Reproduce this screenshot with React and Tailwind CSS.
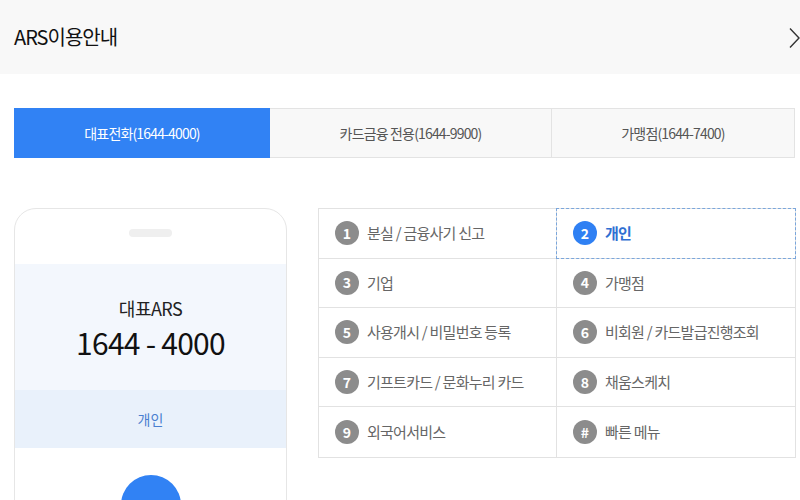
import React from 'react';

const menus = [
  { key: '1', label: '분실 / 금융사기 신고' },
  { key: '2', label: '개인', active: true },
  { key: '3', label: '기업' },
  { key: '4', label: '가맹점' },
  { key: '5', label: '사용개시 / 비밀번호 등록' },
  { key: '6', label: '비회원 / 카드발급진행조회' },
  { key: '7', label: '기프트카드 / 문화누리 카드' },
  { key: '8', label: '채움스케치' },
  { key: '9', label: '외국어서비스' },
  { key: '#', label: '빠른 메뉴' },
];

const tabs = [
  { label: '대표전화(1644-4000)', width: 'w-[256px]', active: true },
  { label: '카드금융 전용(1644-9900)', width: 'w-[282px]' },
  { label: '가맹점(1644-7400)', width: 'flex-1' },
];

const MenuCell = ({ item, index }) => {
  const isRight = index % 2 === 1;
  const isLastRow = index >= menus.length - 2;
  return (
    <div
      className={`relative flex h-[49.6px] items-center pl-4 ${isRight ? '' : 'border-r border-[#e2e2e2]'} ${isLastRow ? '' : 'border-b border-[#e2e2e2]'}`}
    >
      {item.active && (
        <div className="pointer-events-none absolute -inset-px border border-dashed border-[#7aa6dc]" />
      )}
      <span
        className={`flex h-6 w-6 shrink-0 items-center justify-center rounded-full text-[14px] font-bold text-white ${item.active ? 'bg-[#2f80f3]' : 'bg-[#8c8c8c]'}`}
      >
        {item.key}
      </span>
      <span
        className={`ml-2 text-[15px] tracking-[-0.05em] ${item.active ? 'font-bold text-[#2f6fd2]' : 'text-[#666]'}`}
      >
        {item.label}
      </span>
    </div>
  );
};

export default function App() {
  return (
    <div className="h-[500px] w-[800px] overflow-hidden bg-white font-['Noto_Sans_CJK_KR',sans-serif]">
      {/* Header */}
      <div className="flex h-[74px] items-center justify-between bg-[#f8f8f8] pl-[14px]">
        <h1 className="text-[20px] font-normal tracking-[-0.05em] text-[#111]">ARS이용안내</h1>
        <svg width="11" height="22" viewBox="0 0 11 22" className="mt-[1px]">
          <path d="M1 1.5 L10 11 L1 20.5" fill="none" stroke="#333" strokeWidth="1.4" />
        </svg>
      </div>

      {/* Tabs */}
      <div className="mt-[34px] flex h-[50px] pl-[14px] pr-[5px]">
        {tabs.map((tab) => (
          <div
            key={tab.label}
            className={`flex items-center justify-center text-[14px] tracking-[-0.06em] ${tab.width} ${tab.active ? 'bg-[#3182f4] text-white' : 'border border-l-0 border-[#e3e3e3] bg-[#f8f8f8] text-[#555]'}`}
          >
            {tab.label}
          </div>
        ))}
      </div>

      {/* Content */}
      <div className="mt-[50px] flex gap-[31px] pl-[14px] pr-[4px]">
        {/* Phone */}
        <div className="h-[320px] w-[273px] shrink-0 overflow-hidden rounded-t-[22px] border border-[#e6e6e6]">
          <div className="flex h-[55px] items-start justify-center pt-[20px]">
            <div className="h-2 w-[43px] rounded-full bg-[#efefef]" />
          </div>
          <div className="flex h-[126px] flex-col items-center bg-[#f3f7fd] pt-[32px]">
            <div className="text-[18px] leading-[24px] tracking-[-0.03em] text-[#222]">대표ARS</div>
            <div className="mt-[4px] text-[30px] leading-[36px] tracking-[-0.025em] text-[#111]">1644 - 4000</div>
          </div>
          <div className="flex h-[58px] items-center justify-center bg-[#e9f1fb] text-[14px] text-[#4a7fd0]">
            개인
          </div>
          <div className="flex justify-center pt-[27px]">
            <div className="h-[60px] w-[60px] rounded-full bg-[#3182f4]" />
          </div>
        </div>

        {/* Menu grid */}
        <div className="grid flex-1 grid-cols-2 self-start border border-[#e2e2e2]">
          {menus.map((item, i) => (
            <MenuCell key={item.key} item={item} index={i} />
          ))}
        </div>
      </div>
    </div>
  );
}
